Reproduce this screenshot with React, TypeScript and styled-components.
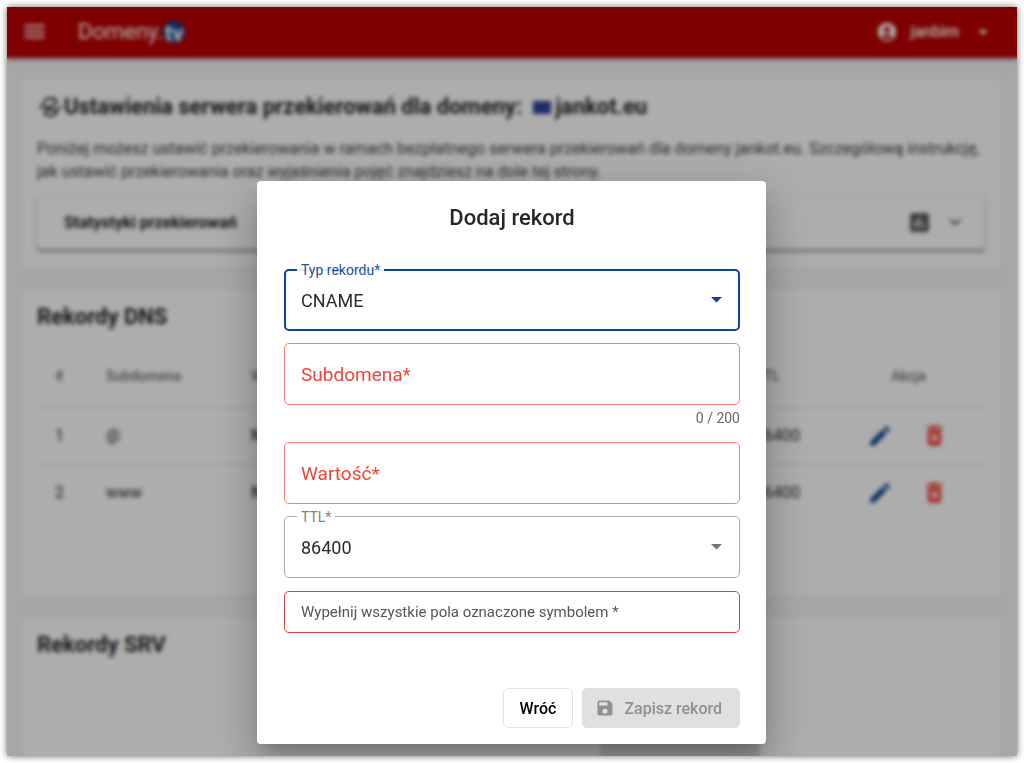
import React, { useState } from "react";
import styled, { createGlobalStyle } from "styled-components";
import {
  MdAccountCircle,
  MdArrowDropDown,
  MdAssessment,
  MdDeleteForever,
  MdEdit,
  MdExpandMore,
  MdMenu,
  MdSave,
} from "react-icons/md";

const GlobalStyle = createGlobalStyle`
  *, *::before, *::after { box-sizing: border-box; }
  body {
    margin: 0;
    background: #fff;
    color: #262626;
    font-family: Roboto, "Liberation Sans", sans-serif;
  }
  button, input, select { font-family: inherit; }
`;

const Stage = styled.div`
  height: 100vh;
  padding: 7px;
`;

const Frame = styled.div`
  position: relative;
  display: flex;
  flex-direction: column;
  height: 100%;
  overflow: hidden;
  background: #f7f7f7;
  box-shadow: 0 0 7px rgba(0, 0, 0, 0.6);
`;

const TopBar = styled.header`
  display: flex;
  align-items: center;
  flex: none;
  height: 51px;
  padding: 0 22px 2px 14px;
  background: #ba0000;
  color: #fff;
  box-shadow: 0 2px 4px rgba(0, 0, 0, 0.3);
`;

const IconButton = styled.button<{ $color?: string }>`
  display: inline-flex;
  padding: 0;
  border: 0;
  background: none;
  color: ${(p) => p.$color ?? "inherit"};
`;

const Logo = styled.a`
  display: flex;
  align-items: center;
  margin-left: 30px;
  margin-right: auto;
  color: #fff;
  font-size: 22px;
  text-decoration: none;
`;

const LogoBadge = styled.span`
  display: grid;
  place-items: center;
  width: 22px;
  height: 22px;
  border-radius: 50%;
  background: #0b4596;
  font-weight: 700;
`;

const UserMenu = styled.button`
  display: flex;
  align-items: center;
  gap: 12px;
  padding: 0;
  border: 0;
  background: none;
  color: #fff;
  font-size: 16px;
  font-weight: 500;
`;

const Content = styled.main`
  display: flex;
  flex: 1;
  flex-direction: column;
  gap: 22px;
  min-height: 0;
  padding: 21px 16px 0 15px;
`;

const Card = styled.section<{ $space?: number; $grow?: boolean }>`
  flex: ${(p) => (p.$grow ? "1 0 auto" : "none")};
  padding: 15px 16px ${(p) => p.$space ?? 18}px 15px;
  border-radius: 4px;
  background: #fff;
  box-shadow: 0 0 3px rgba(0, 0, 0, 0.1);
`;

const Heading = styled.h2`
  display: flex;
  align-items: center;
  margin: 0;
  font-size: 22px;
  font-weight: 700;
  line-height: 26px;
`;

const HeadingIcon = styled.svg`
  width: 23px;
  height: 22px;
  margin: 0 2px 0 2px;
  fill: none;
  stroke: currentColor;
  stroke-width: 2;
`;

const Flag = styled.svg`
  width: 18px;
  height: 13px;
  margin: 0 4px 0 11px;
`;

const Lead = styled.p`
  margin: 17px 0 12px;
  color: #444;
  font-size: 16px;
  line-height: 23px;
`;

const StatsPanel = styled.button`
  display: flex;
  align-items: center;
  width: 100%;
  height: 54px;
  padding: 0 19px 0 27px;
  border: 0;
  border-radius: 4px;
  background: #fff;
  box-shadow: 0 3px 3px rgba(0, 0, 0, 0.3), 0 1px 4px rgba(0, 0, 0, 0.15);
  color: #202020;
  font-size: 16px;
  font-weight: 700;
`;

const StatsTitle = styled.span`
  margin-right: auto;
`;

const StatsIcons = styled.span`
  display: flex;
  align-items: center;
  gap: 12px;
  color: #555;
`;

const RecordTable = styled.table`
  width: 100%;
  margin-top: 15px;
  border-collapse: collapse;
  table-layout: fixed;
  text-align: left;
`;

const HeadCell = styled.th<{ $width?: string; $inset?: number }>`
  width: ${(p) => p.$width ?? "auto"};
  height: 62px;
  padding: 0 0 0 ${(p) => p.$inset ?? 18}px;
  border-bottom: 1px solid #e4e4e4;
  color: #777;
  font-size: 14px;
  font-weight: 500;
`;

const Cell = styled.td<{ $strong?: boolean; $inset?: number }>`
  height: 57px;
  padding: 0 0 0 ${(p) => p.$inset ?? 18}px;
  border-bottom: 1px solid #e4e4e4;
  color: #333;
  font-size: 16px;
  font-weight: ${(p) => (p.$strong ? 500 : 400)};
  tr:last-child > & {
    border-bottom: 0;
  }
`;

const Actions = styled.div`
  display: flex;
  align-items: center;
  gap: 28px;
`;

const AddButton = styled.button`
  display: block;
  width: 160px;
  height: 60px;
  margin: 64px 225px 0 auto;
  border: 0;
  border-radius: 4px;
  background: #e0e0e0;
  font-size: 16px;
`;

const Backdrop = styled.div`
  position: absolute;
  inset: 0;
  display: flex;
  align-items: flex-end;
  justify-content: center;
  padding: 0 13px 12px 12px;
  background: rgba(0, 0, 0, 0.32);
  backdrop-filter: blur(2px);
`;

const Dialog = styled.form`
  display: flex;
  flex-direction: column;
  width: 100%;
  max-width: 509px;
  padding: 23px 26px 16px 27px;
  border-radius: 4px;
  background: #fff;
  box-shadow: 0 11px 15px -7px rgba(0, 0, 0, 0.2), 0 24px 38px 3px rgba(0, 0, 0, 0.14),
    0 9px 46px 8px rgba(0, 0, 0, 0.12);
`;

const DialogTitle = styled.h1`
  margin: 0 0 37px;
  font-size: 22px;
  font-weight: 500;
  line-height: 28px;
  text-align: center;
`;

const Fields = styled.div`
  display: flex;
  flex-direction: column;
  gap: 12px;
`;

const Field = styled.div<{ $tone: string }>`
  position: relative;
  display: grid;
  align-items: center;
  color: ${(p) => p.$tone};
  > * {
    grid-area: 1 / 1;
  }
`;

const control = `
  width: 100%;
  height: 62px;
  padding: 0 17px;
  border-radius: 5px;
  outline: 0;
  background: #fff;
  color: #2c2c2c;
  font-size: 18px;
`;

const Select = styled.select<{ $active?: boolean }>`
  ${control}
  appearance: none;
  padding: 0 ${(p) => (p.$active ? 15 : 16)}px;
  border: ${(p) => (p.$active ? "2px solid #0b4596" : "1px solid #b0b0b0")};
`;

const Input = styled.input`
  ${control}
  border: 1px solid #fa7c73;
`;

const NotchLabel = styled.label`
  position: absolute;
  top: -7px;
  left: 13px;
  padding: 0 4px;
  background: #fff;
  font-size: 14px;
  line-height: 16px;
  opacity: 0.9;
`;

const InnerLabel = styled.label`
  margin-left: 17px;
  justify-self: start;
  font-size: 19px;
  pointer-events: none;
`;

const Caret = styled.svg`
  justify-self: end;
  width: 11px;
  height: 6px;
  margin-right: 18px;
  fill: currentColor;
  pointer-events: none;
`;

const Counter = styled.div`
  height: 13px;
  margin-top: -6px;
  margin-bottom: 6px;
  color: #666;
  font-size: 14px;
  line-height: 14px;
  text-align: right;
`;

const Notice = styled.p`
  margin: 13px 0 55px;
  padding: 0 16px;
  border: 1px solid #e03c3c;
  border-radius: 5px;
  color: #555;
  font-size: 15px;
  line-height: 40px;
`;

const Footer = styled.div`
  display: flex;
  justify-content: flex-end;
  gap: 9px;
`;

const ActionButton = styled.button`
  display: flex;
  align-items: center;
  gap: 9px;
  height: 40px;
  padding: 0 16px;
  border: 1px solid #e4e4e4;
  border-radius: 5px;
  background: #fff;
  color: #000;
  font-size: 16px;
  font-weight: 500;
  &:disabled {
    padding: 0 17px 0 12px;
    border-color: #e0e0e0;
    background: #e0e0e0;
    color: #909090;
  }
`;

const records = [
  { id: 1, sub: "@", value: "NS", ttl: 86400 },
  { id: 2, sub: "www", value: "NS", ttl: 86400 },
];

function DropCaret() {
  return (
    <Caret viewBox="0 0 11 6" aria-hidden="true">
      <path d="M0 0h11L5.500 5.500z" />
    </Caret>
  );
}

export default function App() {
  const [type, setType] = useState("CNAME");
  const [ttl, setTtl] = useState("86400");
  return (
    <Stage>
      <GlobalStyle />
      <Frame>
        <TopBar>
          <IconButton aria-label="Menu">
            <MdMenu size={27} />
          </IconButton>
          <Logo href="#">
            Domeny.<LogoBadge>tv</LogoBadge>
          </Logo>
          <UserMenu>
            <MdAccountCircle size={22} />
            janbim
            <MdArrowDropDown size={24} />
          </UserMenu>
        </TopBar>
        <Content>
          <Card>
            <Heading>
              <HeadingIcon viewBox="0 0 23 22" aria-hidden="true">
                <path d="M0 11h4M19 11h4M4 9a8 8 0 0 1 14-4M19 13a8 8 0 0 1-14 4M4 11h9l5-6M5 17l5-6M9 14h9" />
              </HeadingIcon>
              Ustawienia serwera przekierowań dla domeny:
              <Flag viewBox="0 0 18 13" aria-hidden="true">
                <rect width="18" height="13" fill="#2c3f9c" />
                <circle cx="9" cy="6.500" r="4" fill="none" stroke="#8d8a60" strokeDasharray="1 1.500" />
              </Flag>
              jankot.eu
            </Heading>
            <Lead>
              Poniżej możesz ustawić przekierowania w ramach bezpłatnego serwera przekierowań dla domeny
              jankot.eu. Szczegółową instrukcję, jak ustawić przekierowania oraz wyjaśnienia pojęć znajdziesz
              na dole tej strony.
            </Lead>
            <StatsPanel>
              <StatsTitle>Statystyki przekierowań</StatsTitle>
              <StatsIcons>
                <MdAssessment size={25} />
                <MdExpandMore size={22} />
              </StatsIcons>
            </StatsPanel>
          </Card>
          <Card $space={74}>
            <Heading>Rekordy DNS</Heading>
            <RecordTable>
              <thead>
                <tr>
                  <HeadCell $width="51px">#</HeadCell>
                  <HeadCell $width="145px">Subdomena</HeadCell>
                  <HeadCell>Wartość</HeadCell>
                  <HeadCell $width="100px">TTL</HeadCell>
                  <HeadCell $width="148px" $inset={54}>
                    Akcja
                  </HeadCell>
                </tr>
              </thead>
              <tbody>
                {records.map((r) => (
                  <tr key={r.id}>
                    <Cell>{r.id}</Cell>
                    <Cell>{r.sub}</Cell>
                    <Cell $strong>{r.value}</Cell>
                    <Cell>{r.ttl}</Cell>
                    <Cell $inset={30}>
                      <Actions>
                        <IconButton $color="#0b4596" aria-label="Edytuj">
                          <MdEdit size={26} />
                        </IconButton>
                        <IconButton $color="#f44336" aria-label="Usuń">
                          <MdDeleteForever size={27} />
                        </IconButton>
                      </Actions>
                    </Cell>
                  </tr>
                ))}
              </tbody>
            </RecordTable>
          </Card>
          <Card $grow>
            <Heading>Rekordy SRV</Heading>
            <AddButton aria-label="Dodaj rekord SRV" />
          </Card>
        </Content>
        <Backdrop>
          <Dialog role="dialog" aria-labelledby="dialog-title" onSubmit={(e) => e.preventDefault()}>
            <DialogTitle id="dialog-title">Dodaj rekord</DialogTitle>
            <Fields>
              <Field $tone="#0b4596">
                <Select $active id="type" value={type} onChange={(e) => setType(e.target.value)}>
                  <option>CNAME</option>
                  <option>A</option>
                </Select>
                <NotchLabel htmlFor="type">Typ rekordu*</NotchLabel>
                <DropCaret />
              </Field>
              <Field $tone="#f44336">
                <Input id="subdomain" maxLength={200} />
                <InnerLabel htmlFor="subdomain">Subdomena*</InnerLabel>
              </Field>
              <Counter>0 / 200</Counter>
              <Field $tone="#f44336">
                <Input id="value" />
                <InnerLabel htmlFor="value">Wartość*</InnerLabel>
              </Field>
              <Field $tone="#757575">
                <Select id="ttl" value={ttl} onChange={(e) => setTtl(e.target.value)}>
                  <option>86400</option>
                  <option>3600</option>
                </Select>
                <NotchLabel htmlFor="ttl">TTL*</NotchLabel>
                <DropCaret />
              </Field>
            </Fields>
            <Notice>Wypełnij wszystkie pola oznaczone symbolem *</Notice>
            <Footer>
              <ActionButton type="button">Wróć</ActionButton>
              <ActionButton type="submit" disabled>
                <MdSave size={20} />
                Zapisz rekord
              </ActionButton>
            </Footer>
          </Dialog>
        </Backdrop>
      </Frame>
    </Stage>
  );
}
